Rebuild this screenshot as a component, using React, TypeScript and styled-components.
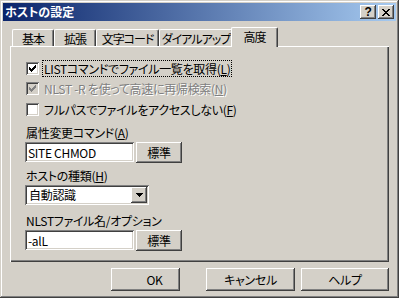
import React from 'react'
import styled, { createGlobalStyle, css } from 'styled-components'

const GlobalStyle = createGlobalStyle`
  html, body {
    margin: 0;
    padding: 0;
    background: #d4d0c8;
  }
  body {
    width: 399px;
    height: 298px;
    overflow: hidden;
    font-family: "Noto Sans CJK JP", "Noto Sans", sans-serif;
    font-size: 12px;
    font-feature-settings: "palt";
    letter-spacing: -0.3px;
    color: #000;
  }
  * {
    box-sizing: border-box;
  }
`

const raised = css`
  box-shadow: inset -1px -1px #404040, inset 1px 1px #fff, inset -2px -2px #808080, inset 2px 2px #d4d0c8;
`

const sunken = css`
  box-shadow: inset 1px 1px #808080, inset -1px -1px #fff, inset 2px 2px #404040, inset -2px -2px #d4d0c8;
`

const Window = styled.div`
  width: 399px;
  height: 298px;
  padding: 3px;
  display: flex;
  flex-direction: column;
  background: #d4d0c8;
  box-shadow: inset -1px -1px #404040, inset 1px 1px #d4d0c8, inset -2px -2px #808080, inset 2px 2px #fff;
`

const TitleBar = styled.div`
  height: 18px;
  display: flex;
  align-items: center;
  padding: 0 2px;
  background: linear-gradient(to right, #0a246a, #a6caf0);
`

const Title = styled.span`
  flex: 1;
  color: #fff;
  font-weight: bold;
  line-height: 14px;
  letter-spacing: 0;
`

const CaptionButtons = styled.div`
  display: flex;
  gap: 2px;
`

const CaptionButton = styled.div`
  width: 16px;
  height: 14px;
  display: flex;
  align-items: center;
  justify-content: center;
  background: #d4d0c8;
  ${raised};
  font-family: "Liberation Sans", sans-serif;
  font-weight: bold;
  font-size: 12px;
  line-height: 12px;
`

const Body = styled.div`
  flex: 1;
  display: flex;
  flex-direction: column;
  padding: 6px 7px 0;
`

const TabRow = styled.div`
  display: flex;
  align-items: flex-end;
  height: 19px;
  padding-left: 2px;
`

const Tab = styled.div<{ $w: number; $active?: boolean }>`
  width: ${(p) => p.$w}px;
  height: 17px;
  flex-shrink: 0;
  display: flex;
  align-items: center;
  justify-content: center;
  white-space: nowrap;
  letter-spacing: -1px;
  border-top: 1px solid #fff;
  border-left: 1px solid #fff;
  border-right: 1px solid #404040;
  border-radius: 2px 2px 0 0;
  box-shadow: inset -1px 0 #808080;
  background: #d4d0c8;
  line-height: 14px;
  padding-top: 1px;
  ${(p) =>
    p.$active &&
    css`
      width: ${p.$w + 4}px;
      height: 20px;
      margin: 0 -2px -1px;
      position: relative;
      z-index: 1;
      padding-top: 0;
      padding-bottom: 2px;
    `}
`

const Panel = styled.div`
  height: 216px;
  display: flex;
  flex-direction: column;
  padding: 16px 0 0 15px;
  box-shadow: inset 1px 1px #fff, inset -1px -1px #404040, inset -2px -2px #808080;
`

const CheckRow = styled.div<{ $mt: number }>`
  display: flex;
  align-items: center;
  height: 13px;
  margin: ${(p) => p.$mt}px 0 0 1px;
`

const CheckBox = styled.div<{ $disabled?: boolean }>`
  width: 13px;
  height: 13px;
  flex-shrink: 0;
  display: flex;
  align-items: center;
  justify-content: center;
  background: ${(p) => (p.$disabled ? '#d4d0c8' : '#fff')};
  ${sunken};
`

const CheckLabel = styled.span<{ $focus?: boolean; $disabled?: boolean }>`
  margin-left: 3px;
  padding: 0 1px;
  line-height: 15px;
  white-space: nowrap;
  border: 1px dotted ${(p) => (p.$focus ? '#000' : 'transparent')};
  color: ${(p) => (p.$disabled ? '#808080' : '#000')};
  text-shadow: ${(p) => (p.$disabled ? '1px 1px 0 #fff' : 'none')};
`

const FieldLabel = styled.div<{ $mt: number }>`
  margin-top: ${(p) => p.$mt}px;
  padding-left: 1px;
  line-height: 14px;
  white-space: nowrap;
`

const FieldRow = styled.div<{ $mt: number }>`
  display: flex;
  align-items: flex-start;
  gap: 2px;
  margin-top: ${(p) => p.$mt}px;
`

const TextBox = styled.div`
  width: 109px;
  height: 20px;
  display: flex;
  align-items: center;
  padding: 0 3px;
  background: #fff;
  ${sunken};
  white-space: nowrap;
`

const SmallButton = styled.div`
  width: 46px;
  height: 21px;
  display: flex;
  align-items: center;
  justify-content: center;
  ${raised};
`

const Combo = styled.div`
  width: 124px;
  height: 20px;
  display: flex;
  align-items: center;
  padding: 2px;
  background: #fff;
  ${sunken};
`

const ComboText = styled.span`
  flex: 1;
  padding-left: 2px;
  line-height: 14px;
`

const DropButton = styled.div`
  width: 16px;
  height: 16px;
  display: flex;
  align-items: center;
  justify-content: center;
  background: #d4d0c8;
  ${raised};
`

const Footer = styled.div`
  display: flex;
  justify-content: flex-end;
  margin-top: 6px;
`

const DialogButton = styled.div<{ $w: number; $ml: number; $shift?: number }>`
  width: ${(p) => p.$w}px;
  height: 23px;
  margin-left: ${(p) => p.$ml}px;
  display: flex;
  align-items: center;
  justify-content: center;
  padding-left: ${(p) => p.$shift ?? 0}px;
  white-space: nowrap;
  ${raised};
`

const Check = ({ color }: { color: string }) => (
  <svg width="7" height="7" viewBox="0 0 7 7" shapeRendering="crispEdges">
    {[2, 3, 4, 3, 2, 1, 0].map((y, i) => (
      <rect key={i} x={i} y={y} width="1" height="3" fill={color} />
    ))}
  </svg>
)

const CloseGlyph = () => {
  const rows: [number, number][][] = [
    [[0, 2], [6, 2]],
    [[1, 2], [5, 2]],
    [[2, 4]],
    [[3, 2]],
    [[2, 4]],
    [[1, 2], [5, 2]],
    [[0, 2], [6, 2]],
  ]
  return (
    <svg width="8" height="7" viewBox="0 0 8 7" shapeRendering="crispEdges">
      {rows.map((r, y) => r.map(([x, w]) => <rect key={`${y}-${x}`} x={x} y={y} width={w} height="1" fill="#000" />))}
    </svg>
  )
}

const DownArrow = () => (
  <svg width="7" height="4" viewBox="0 0 7 4" shapeRendering="crispEdges">
    {[0, 1, 2, 3].map((y) => (
      <rect key={y} x={y} y={y} width={7 - y * 2} height="1" fill="#000" />
    ))}
  </svg>
)

const tabs = [
  { label: '基本', w: 42 },
  { label: '拡張', w: 42 },
  { label: '文字コード', w: 63 },
  { label: 'ダイアルアップ', w: 74 },
  { label: '高度', w: 43, active: true },
]

export default function App() {
  return (
    <>
      <GlobalStyle />
      <Window>
        <TitleBar>
          <Title>ホストの設定</Title>
          <CaptionButtons>
            <CaptionButton>?</CaptionButton>
            <CaptionButton>
              <CloseGlyph />
            </CaptionButton>
          </CaptionButtons>
        </TitleBar>
        <Body>
          <TabRow>
            {tabs.map((t) => (
              <Tab key={t.label} $w={t.w} $active={t.active}>
                {t.label}
              </Tab>
            ))}
          </TabRow>
          <Panel>
            <CheckRow $mt={0}>
              <CheckBox>
                <Check color="#000" />
              </CheckBox>
              <CheckLabel $focus>
                LISTコマンドでファイル一覧を取得(<u>L</u>)
              </CheckLabel>
            </CheckRow>
            <CheckRow $mt={7}>
              <CheckBox $disabled>
                <Check color="#808080" />
              </CheckBox>
              <CheckLabel $disabled>
                NLST -R を使って高速に再帰検索(<u>N</u>)
              </CheckLabel>
            </CheckRow>
            <CheckRow $mt={8}>
              <CheckBox />
              <CheckLabel>
                フルパスでファイルをアクセスしない(<u>F</u>)
              </CheckLabel>
            </CheckRow>

            <FieldLabel $mt={10}>
              属性変更コマンド(<u>A</u>)
            </FieldLabel>
            <FieldRow $mt={2}>
              <TextBox>SITE CHMOD</TextBox>
              <SmallButton>標準</SmallButton>
            </FieldRow>

            <FieldLabel $mt={6}>
              ホストの種類(<u>H</u>)
            </FieldLabel>
            <FieldRow $mt={2}>
              <Combo>
                <ComboText>自動認識</ComboText>
                <DropButton>
                  <DownArrow />
                </DropButton>
              </Combo>
            </FieldRow>

            <FieldLabel $mt={9}>NLSTファイル名/オプション</FieldLabel>
            <FieldRow $mt={2}>
              <TextBox>-alL</TextBox>
              <SmallButton>標準</SmallButton>
            </FieldRow>
          </Panel>
          <Footer>
            <DialogButton $w={69} $ml={0} $shift={18}>
              OK
            </DialogButton>
            <DialogButton $w={89} $ml={26}>
              キャンセル
            </DialogButton>
            <DialogButton $w={88} $ml={6}>
              ヘルプ
            </DialogButton>
          </Footer>
        </Body>
      </Window>
    </>
  )
}
